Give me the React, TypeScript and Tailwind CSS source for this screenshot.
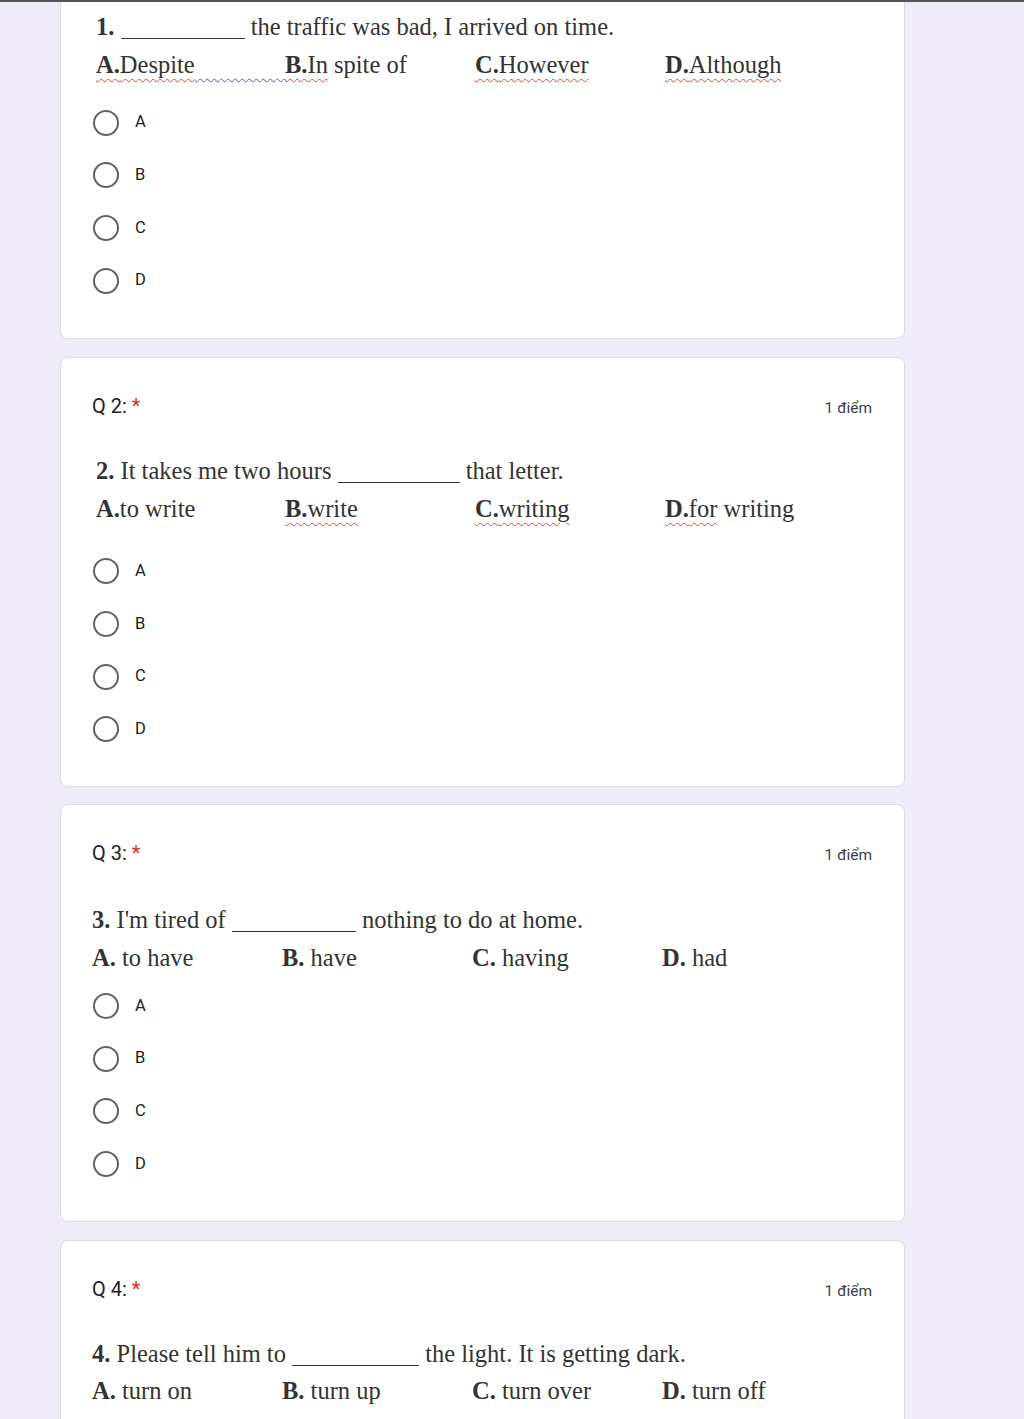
import React from "react";

type Opt = { label: string; text: string; squiggle?: "all" | "label" | "none"; gap?: boolean };

const serif = "font-['Liberation_Serif','Times_New_Roman',serif]";
const sans = "font-[Roboto,Arial,sans-serif]";
const wavy =
  "underline decoration-wavy decoration-[#e0453c] decoration-1 underline-offset-[5px]";
const wavyBlue =
  "underline decoration-wavy decoration-[#4a5fd0] decoration-1 underline-offset-[5px]";

function Blank({ w }: { w: string }) {
  return <span className={`inline-block ${w} h-px border-b-[1.5px] border-[#333] align-[-4px]`} />;
}

function OptionCell({ o, spaced }: { o: Opt; spaced: boolean }) {
  const sq = o.squiggle ?? "none";
  return (
    <div className="whitespace-nowrap">
      {sq === "all" ? (
        <span className={wavy}>
          <b>{o.label}</b>
          {o.text}
        </span>
      ) : sq === "label" ? (
        <>
          <span className={wavy}>
            <b>{o.label}</b>
            {o.text.split(" ")[0]}
          </span>
          {" " + o.text.split(" ").slice(1).join(" ")}
        </>
      ) : (
        <>
          <b>{o.label}</b>
          {spaced ? " " : ""}
          {o.text}
        </>
      )}
      {o.gap ? <span className={wavyBlue}>{"\u00a0".repeat(15)}</span> : null}
    </div>
  );
}

function Radios({ mt }: { mt: string }) {
  return (
    <div className={`flex flex-col ${mt}`}>
      {["A", "B", "C", "D"].map((l) => (
        <div key={l} className="h-[52.67px] flex items-center">
          <div className="w-[28px] flex justify-center">
            <div className="w-[26px] h-[26px] rounded-full border-2 border-[#5f6368]" />
          </div>
          <span className={`${sans} ml-[15px] text-[16.5px] text-[#202124]`}>{l}</span>
        </div>
      ))}
    </div>
  );
}

function Header({ n }: { n: number }) {
  return (
    <div className={`${sans} flex justify-between items-baseline h-[24px]`}>
      <div className="text-[20px] leading-[24px] text-[#202124]">
        Q {n}: <span className="text-[#d93025]">*</span>
      </div>
      <div className="text-[15.5px] leading-[24px] text-[#3c4043]">1 điểm</div>
    </div>
  );
}

export default function App() {
  return (
    <div className="min-h-[1419px] bg-[#f0ebf8]">
      <div className="h-[2px] bg-[#555]" />
      {/* Card 1 */}
      <div className="ml-[60px] w-[845px] bg-white border-x border-b border-[#dadce0] rounded-b-lg pl-[31px] pr-[32px] pt-[6px] pb-[31px]">
        <div className={`${serif} text-[24.5px] text-[#333] pl-[4px]`}>
          <div className="h-[38px] leading-[38px] whitespace-nowrap">
            <b>1.</b> <Blank w="w-[124px]" /> the traffic was bad, I arrived on time.
          </div>
          <div className="h-[38px] leading-[38px] grid grid-cols-[189px_190px_190px_190px]">
            <OptionCell o={{ label: "A.", text: "Despite", squiggle: "all", gap: true }} spaced={false} />
            <OptionCell o={{ label: "B.", text: "In spite of", squiggle: "label" }} spaced={false} />
            <OptionCell o={{ label: "C.", text: "However", squiggle: "all" }} spaced={false} />
            <OptionCell o={{ label: "D.", text: "Although", squiggle: "all" }} spaced={false} />
          </div>
        </div>
        <Radios mt="mt-[12.5px]" />
      </div>

      {/* Card 2 */}
      <div className="mt-[17.5px] ml-[60px] w-[845px] bg-white border border-[#dadce0] rounded-lg pl-[31px] pr-[32px] pt-[36px] pb-[30px]">
        <Header n={2} />
        <div className={`${serif} text-[24.5px] text-[#333] pl-[4px] mt-[34px]`}>
          <div className="h-[38px] leading-[38px] whitespace-nowrap">
            <b>2.</b> It takes me two hours <Blank w="w-[122px]" /> that letter.
          </div>
          <div className="h-[38px] leading-[38px] grid grid-cols-[189px_190px_190px_190px]">
            <OptionCell o={{ label: "A.", text: "to write" }} spaced={false} />
            <OptionCell o={{ label: "B.", text: "write", squiggle: "all" }} spaced={false} />
            <OptionCell o={{ label: "C.", text: "writing", squiggle: "all" }} spaced={false} />
            <OptionCell o={{ label: "D.", text: "for writing", squiggle: "label" }} spaced={false} />
          </div>
        </div>
        <Radios mt="mt-[17.5px]" />
      </div>

      {/* Card 3 */}
      <div className="mt-[17.5px] ml-[60px] w-[845px] bg-white border border-[#dadce0] rounded-lg pl-[31px] pr-[32px] pt-[36px] pb-[31px]">
        <Header n={3} />
        <div className={`${serif} text-[24.5px] text-[#333] mt-[36px]`}>
          <div className="h-[38px] leading-[38px] whitespace-nowrap">
            <b>3.</b> I'm tired of <Blank w="w-[124px]" /> nothing to do at home.
          </div>
          <div className="h-[37px] leading-[37px] grid grid-cols-[190px_190px_190px_190px]">
            <OptionCell o={{ label: "A.", text: "to have" }} spaced />
            <OptionCell o={{ label: "B.", text: "have" }} spaced />
            <OptionCell o={{ label: "C.", text: "having" }} spaced />
            <OptionCell o={{ label: "D.", text: "had" }} spaced />
          </div>
        </div>
        <Radios mt="mt-[3.5px]" />
      </div>

      {/* Card 4 */}
      <div className="mt-[17.5px] ml-[60px] w-[845px] bg-white border-x border-t border-[#dadce0] rounded-t-lg pl-[31px] pr-[32px] pt-[36px] pb-[40px]">
        <Header n={4} />
        <div className={`${serif} text-[24.5px] text-[#333] mt-[34px]`}>
          <div className="h-[38px] leading-[38px] whitespace-nowrap">
            <b>4.</b> Please tell him to <Blank w="w-[127px]" /> the light. It is getting dark.
          </div>
          <div className="h-[36px] leading-[36px] grid grid-cols-[190px_190px_190px_190px]">
            <OptionCell o={{ label: "A.", text: "turn on" }} spaced />
            <OptionCell o={{ label: "B.", text: "turn up" }} spaced />
            <OptionCell o={{ label: "C.", text: "turn over" }} spaced />
            <OptionCell o={{ label: "D.", text: "turn off" }} spaced />
          </div>
        </div>
      </div>
    </div>
  );
}
